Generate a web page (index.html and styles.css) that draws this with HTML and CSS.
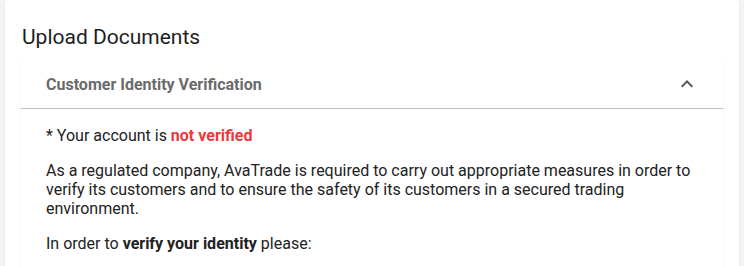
FILE: index.html
```html
<!DOCTYPE html>
<html lang="en">
<head>
    <meta charset="UTF-8">
    <meta name="viewport" content="width=device-width, initial-scale=1.0">
    <title>Upload Documents</title>
    <link rel="stylesheet" href="styles.css">
</head>
<body>

    <div class="card">
        <h1>Upload Documents</h1>

        <div class="panel">
            <div class="panel-header">
                <span class="panel-title">Customer Identity Verification</span>
                <svg class="chevron" width="24" height="24" viewBox="0 0 24 24">
                    <path d="M12 8l-6 6 1.41 1.41L12 10.83l4.59 4.58L18 14z"/>
                </svg>
            </div>

            <div class="panel-body">
                <p>* Your account is <span class="not-verified">not verified</span></p>
                <p>As a regulated company, AvaTrade is required to carry out appropriate measures in order to verify its customers and to ensure the safety of its customers in a secured trading environment.</p>
                <p>In order to <strong>verify your identity</strong> please:</p>
            </div>
        </div>
    </div>

</body>
</html>
```

FILE: styles.css
```css
body {
    font-family: Roboto, 'Liberation Sans', Arial, sans-serif;
    color: #222;
    margin: 0;
    background-color: #f3f3f3;
}
.card {
    background-color: #fff;
    margin: 0 5px;
    padding: 25px 16px 0 16px;
    height: 266px;
    overflow: hidden;
    box-sizing: border-box;
    border-radius: 4px 4px 0 0;
    box-shadow: 0 1px 3px rgba(0,0,0,0.06);
}
h1 {
    font-size: 21px;
    font-weight: normal;
    line-height: 24px;
    margin: 0 0 11px 1px;
    color: #1e1e1e;
}
.panel {
    background-color: #fff;
    box-shadow: 0 1px 3px rgba(0,0,0,0.08);
    border-radius: 2px;
}
.panel-header {
    display: flex;
    justify-content: space-between;
    align-items: center;
    height: 48px;
    padding: 0 24px 0 25px;
    border-bottom: 1px solid #bdbdbd;
}
.panel-title {
    font-size: 16px;
    font-weight: bold;
    color: #6b6b6b;
}
.chevron {
    fill: #555;
}
.panel-body {
    padding: 17px 25px 24px 25px;
    font-size: 16px;
    line-height: 19px;
}
.panel-body p {
    margin: 0 0 16px 0;
}
.not-verified {
    color: #f0383a;
    font-weight: bold;
}
```
